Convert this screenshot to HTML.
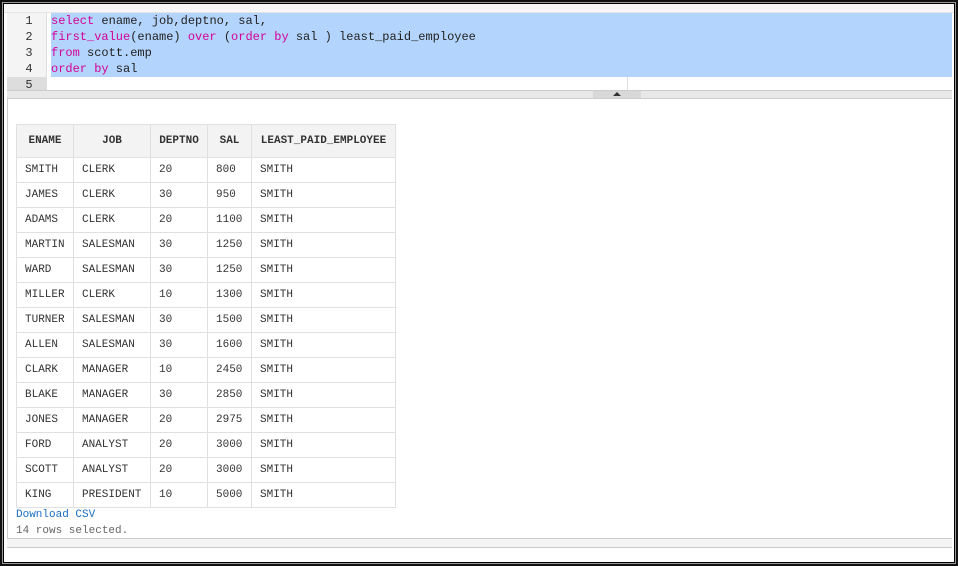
<!DOCTYPE html>
<html><head><style>
*{margin:0;padding:0;box-sizing:border-box}
body{width:958px;height:566px;background:#111;position:relative;overflow:hidden;font-family:"Liberation Mono",monospace}
.frame{position:absolute;left:2px;top:2px;right:2px;bottom:2px;background:#999;}
.inner{position:absolute;left:1px;top:1px;right:1px;bottom:1px;background:#000}
.white{position:absolute;left:4px;top:4px;right:4px;bottom:4px;background:#fff}
.topbar{position:absolute;left:4px;top:4px;right:4px;height:9px;background:#f7f7f7;border-bottom:1px solid #e4e4e4}
.ed{position:absolute;left:7px;top:13px;width:945px;height:78px;background:#fff}
.gut{position:absolute;left:0;top:0;width:40px;height:78px;background:#f4f4f4;border-right:1px solid #ddd}
.ln{position:absolute;left:0;width:40px;text-align:center;font-size:12px;color:#333;height:16px;line-height:16px;padding-left:4px}
.sel{position:absolute;left:44px;top:0;width:901px;height:64px;background:#b3d4fc}
.code{position:absolute;left:44px;font-size:12px;line-height:16px;color:#222;white-space:pre}
.k{color:#d4009a}
.split{position:absolute;left:7px;top:90px;width:945px;height:9px;background:#e8e8e8;border-top:1px solid #ccc;border-bottom:1px solid #ccc}
.res{position:absolute;left:7px;top:99px;width:945px;height:440px;border-left:1px solid #ccc;border-bottom:1px solid #ccc;background:#fff}
table{position:absolute;left:8px;top:25px;border-collapse:collapse;font-size:11px;color:#333}
td,th{border:1px solid #e0e0e0;height:25px;padding:0 8px;text-align:left;white-space:nowrap}
th{height:33px;background:#f3f3f3;font-weight:bold;text-align:center}
</style></head><body>
<div class="frame"><div class="inner"></div></div>
<div class="white"></div>
<div class="topbar"></div>
<div class="ed">
<div class="gut"></div>
<div style="position:absolute;left:0;top:64px;width:40px;height:14px;background:#ddd"></div>
<div class="sel"></div>
<div style="position:absolute;left:620px;top:64px;width:1px;height:14px;background:#ddd"></div>
<div class="ln" style="top:0">1</div><div class="ln" style="top:16px">2</div><div class="ln" style="top:32px">3</div><div class="ln" style="top:48px">4</div><div class="ln" style="top:64px">5</div>
<div class="code" style="top:0"><span class="k">select</span> ename, job,deptno, sal,</div>
<div class="code" style="top:16px"><span class="k">first_value</span>(ename) <span class="k">over</span> (<span class="k">order by</span> sal ) least_paid_employee</div>
<div class="code" style="top:32px"><span class="k">from</span> scott.emp</div>
<div class="code" style="top:48px"><span class="k">order by</span> sal</div>
</div>
<div class="split"><div style="position:absolute;left:586px;top:0;width:48px;height:7px;background:#d8d8d8"></div><div style="position:absolute;left:606px;top:1px;width:0;height:0;border-left:4px solid transparent;border-right:4px solid transparent;border-bottom:4px solid #333"></div></div>
<div class="res">
<table>
<tr><th style="width:57px">ENAME</th><th style="width:77px">JOB</th><th style="width:57px">DEPTNO</th><th style="width:44px">SAL</th><th style="width:144px">LEAST_PAID_EMPLOYEE</th></tr>
<tr><td>SMITH</td><td>CLERK</td><td>20</td><td>800</td><td>SMITH</td></tr>
<tr><td>JAMES</td><td>CLERK</td><td>30</td><td>950</td><td>SMITH</td></tr>
<tr><td>ADAMS</td><td>CLERK</td><td>20</td><td>1100</td><td>SMITH</td></tr>
<tr><td>MARTIN</td><td>SALESMAN</td><td>30</td><td>1250</td><td>SMITH</td></tr>
<tr><td>WARD</td><td>SALESMAN</td><td>30</td><td>1250</td><td>SMITH</td></tr>
<tr><td>MILLER</td><td>CLERK</td><td>10</td><td>1300</td><td>SMITH</td></tr>
<tr><td>TURNER</td><td>SALESMAN</td><td>30</td><td>1500</td><td>SMITH</td></tr>
<tr><td>ALLEN</td><td>SALESMAN</td><td>30</td><td>1600</td><td>SMITH</td></tr>
<tr><td>CLARK</td><td>MANAGER</td><td>10</td><td>2450</td><td>SMITH</td></tr>
<tr><td>BLAKE</td><td>MANAGER</td><td>30</td><td>2850</td><td>SMITH</td></tr>
<tr><td>JONES</td><td>MANAGER</td><td>20</td><td>2975</td><td>SMITH</td></tr>
<tr><td>FORD</td><td>ANALYST</td><td>20</td><td>3000</td><td>SMITH</td></tr>
<tr><td>SCOTT</td><td>ANALYST</td><td>20</td><td>3000</td><td>SMITH</td></tr>
<tr><td>KING</td><td>PRESIDENT</td><td>10</td><td>5000</td><td>SMITH</td></tr>
</table>
<div style="position:absolute;left:8px;top:410px;font-size:11px;color:#1a6fc4">Download CSV</div>
<div style="position:absolute;left:8px;top:426px;font-size:11px;color:#666">14 rows selected.</div>
</div>
<div style="position:absolute;left:7px;top:539px;width:945px;height:9px;background:#f4f4f4;border-bottom:1px solid #ccc"></div>
</body></html>
